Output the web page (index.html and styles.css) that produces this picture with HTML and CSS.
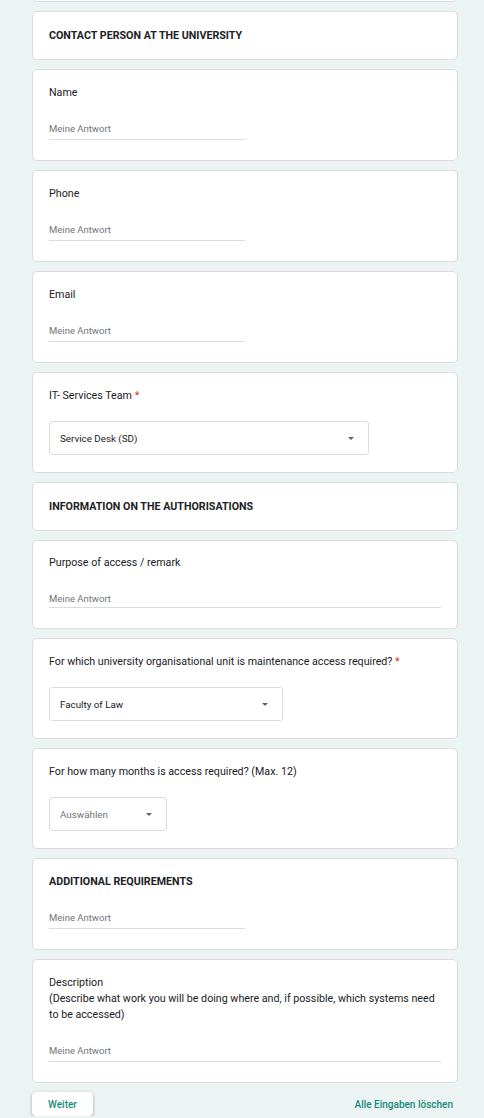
FILE: index.html
```html
<!DOCTYPE html>
<html lang="de">
<head>
<meta charset="utf-8">
<title>Formular</title>
<link rel="stylesheet" href="styles.css">
</head>
<body>
<div class="form">
  <div class="card partial"></div>

  <div class="card section">
    <div class="title">CONTACT PERSON AT THE UNIVERSITY</div>
  </div>

  <div class="card">
    <div class="label">Name</div>
    <div class="answer short">Meine Antwort</div>
  </div>

  <div class="card">
    <div class="label">Phone</div>
    <div class="answer short">Meine Antwort</div>
  </div>

  <div class="card">
    <div class="label">Email</div>
    <div class="answer short">Meine Antwort</div>
  </div>

  <div class="card select-card">
    <div class="label">IT- Services Team <span class="req">*</span></div>
    <div class="select wide">
      <span class="value">Service Desk (SD)</span>
      <span class="arrow"></span>
    </div>
  </div>

  <div class="card section">
    <div class="title">INFORMATION ON THE AUTHORISATIONS</div>
  </div>

  <div class="card compact">
    <div class="label">Purpose of access / remark</div>
    <div class="answer long">Meine Antwort</div>
  </div>

  <div class="card select-card">
    <div class="label">For which university organisational unit is maintenance access required? <span class="req">*</span></div>
    <div class="select medium">
      <span class="value">Faculty of Law</span>
      <span class="arrow"></span>
    </div>
  </div>

  <div class="card select-card">
    <div class="label">For how many months is access required? (Max. 12)</div>
    <div class="select small">
      <span class="value muted">Auswählen</span>
      <span class="arrow"></span>
    </div>
  </div>

  <div class="card">
    <div class="title">ADDITIONAL REQUIREMENTS</div>
    <div class="answer short">Meine Antwort</div>
  </div>

  <div class="card">
    <div class="label">Description<br>(Describe what work you will be doing where and, if possible, which systems need to be accessed)</div>
    <div class="answer long">Meine Antwort</div>
  </div>

  <div class="footer">
    <button class="btn">Weiter</button>
    <span class="clear">Alle Eingaben löschen</span>
  </div>
</div>
</body>
</html>
```

FILE: styles.css
```css
html, body {
  margin: 0;
  padding: 0;
  background: #ebf4f2;
}

body {
  font-family: Roboto, "Liberation Sans", Arial, sans-serif;
  color: #202124;
  overflow: hidden;
}

.form {
  display: flex;
  flex-direction: column;
  gap: 9px;
  margin-top: -40px;
  padding: 0 26px 0 32px;
}

.card {
  background: #fff;
  border: 1px solid #dadce0;
  border-radius: 5px;
  padding: 15px 16px 20px;
}

.card.partial {
  height: 40px;
  padding: 0;
}

.card.section {
  padding: 16px 16px 15px;
}

.card.select-card {
  padding-bottom: 17px;
}

.card.compact {
  padding-top: 14px;
}

.title {
  font-size: 10.7px;
  font-weight: 700;
  line-height: 16px;
}

.label {
  font-size: 10.7px;
  line-height: 16px;
}

.req {
  color: #d93025;
}

.answer {
  margin-top: 20px;
  font-size: 9.5px;
  line-height: 16px;
  padding-bottom: 2px;
  color: #70757a;
  border-bottom: 1px solid #dadce0;
}

.answer.short {
  width: 196px;
}

.compact .answer {
  padding-bottom: 0;
}

.select {
  margin-top: 17px;
  height: 32px;
  border: 1px solid #dadce0;
  border-radius: 3px;
  display: flex;
  align-items: center;
  justify-content: space-between;
  padding: 0 12px 0 10px;
  font-size: 9.8px;
}

.select.wide {
  width: 296px;
}

.select.medium {
  width: 210px;
}

.select.small {
  width: 94px;
}

.value.muted {
  color: #70757a;
}

.arrow {
  width: 0;
  height: 0;
  border-left: 3px solid transparent;
  border-right: 3px solid transparent;
  border-top: 3px solid #5f6368;
  margin-right: 2px;
}

.footer {
  display: flex;
  justify-content: space-between;
  align-items: center;
  padding-right: 5px;
}

.btn {
  width: 61px;
  height: 24px;
  border: none;
  border-radius: 4px;
  background: #fff;
  box-shadow: 0 1px 2px rgba(60, 64, 67, 0.3), 0 1px 3px 1px rgba(60, 64, 67, 0.15);
  color: #168a7c;
  font-family: inherit;
  font-size: 10px;
  font-weight: 500;
  padding: 0;
}

.clear {
  color: #168a7c;
  font-size: 10px;
  font-weight: 500;
}
```
